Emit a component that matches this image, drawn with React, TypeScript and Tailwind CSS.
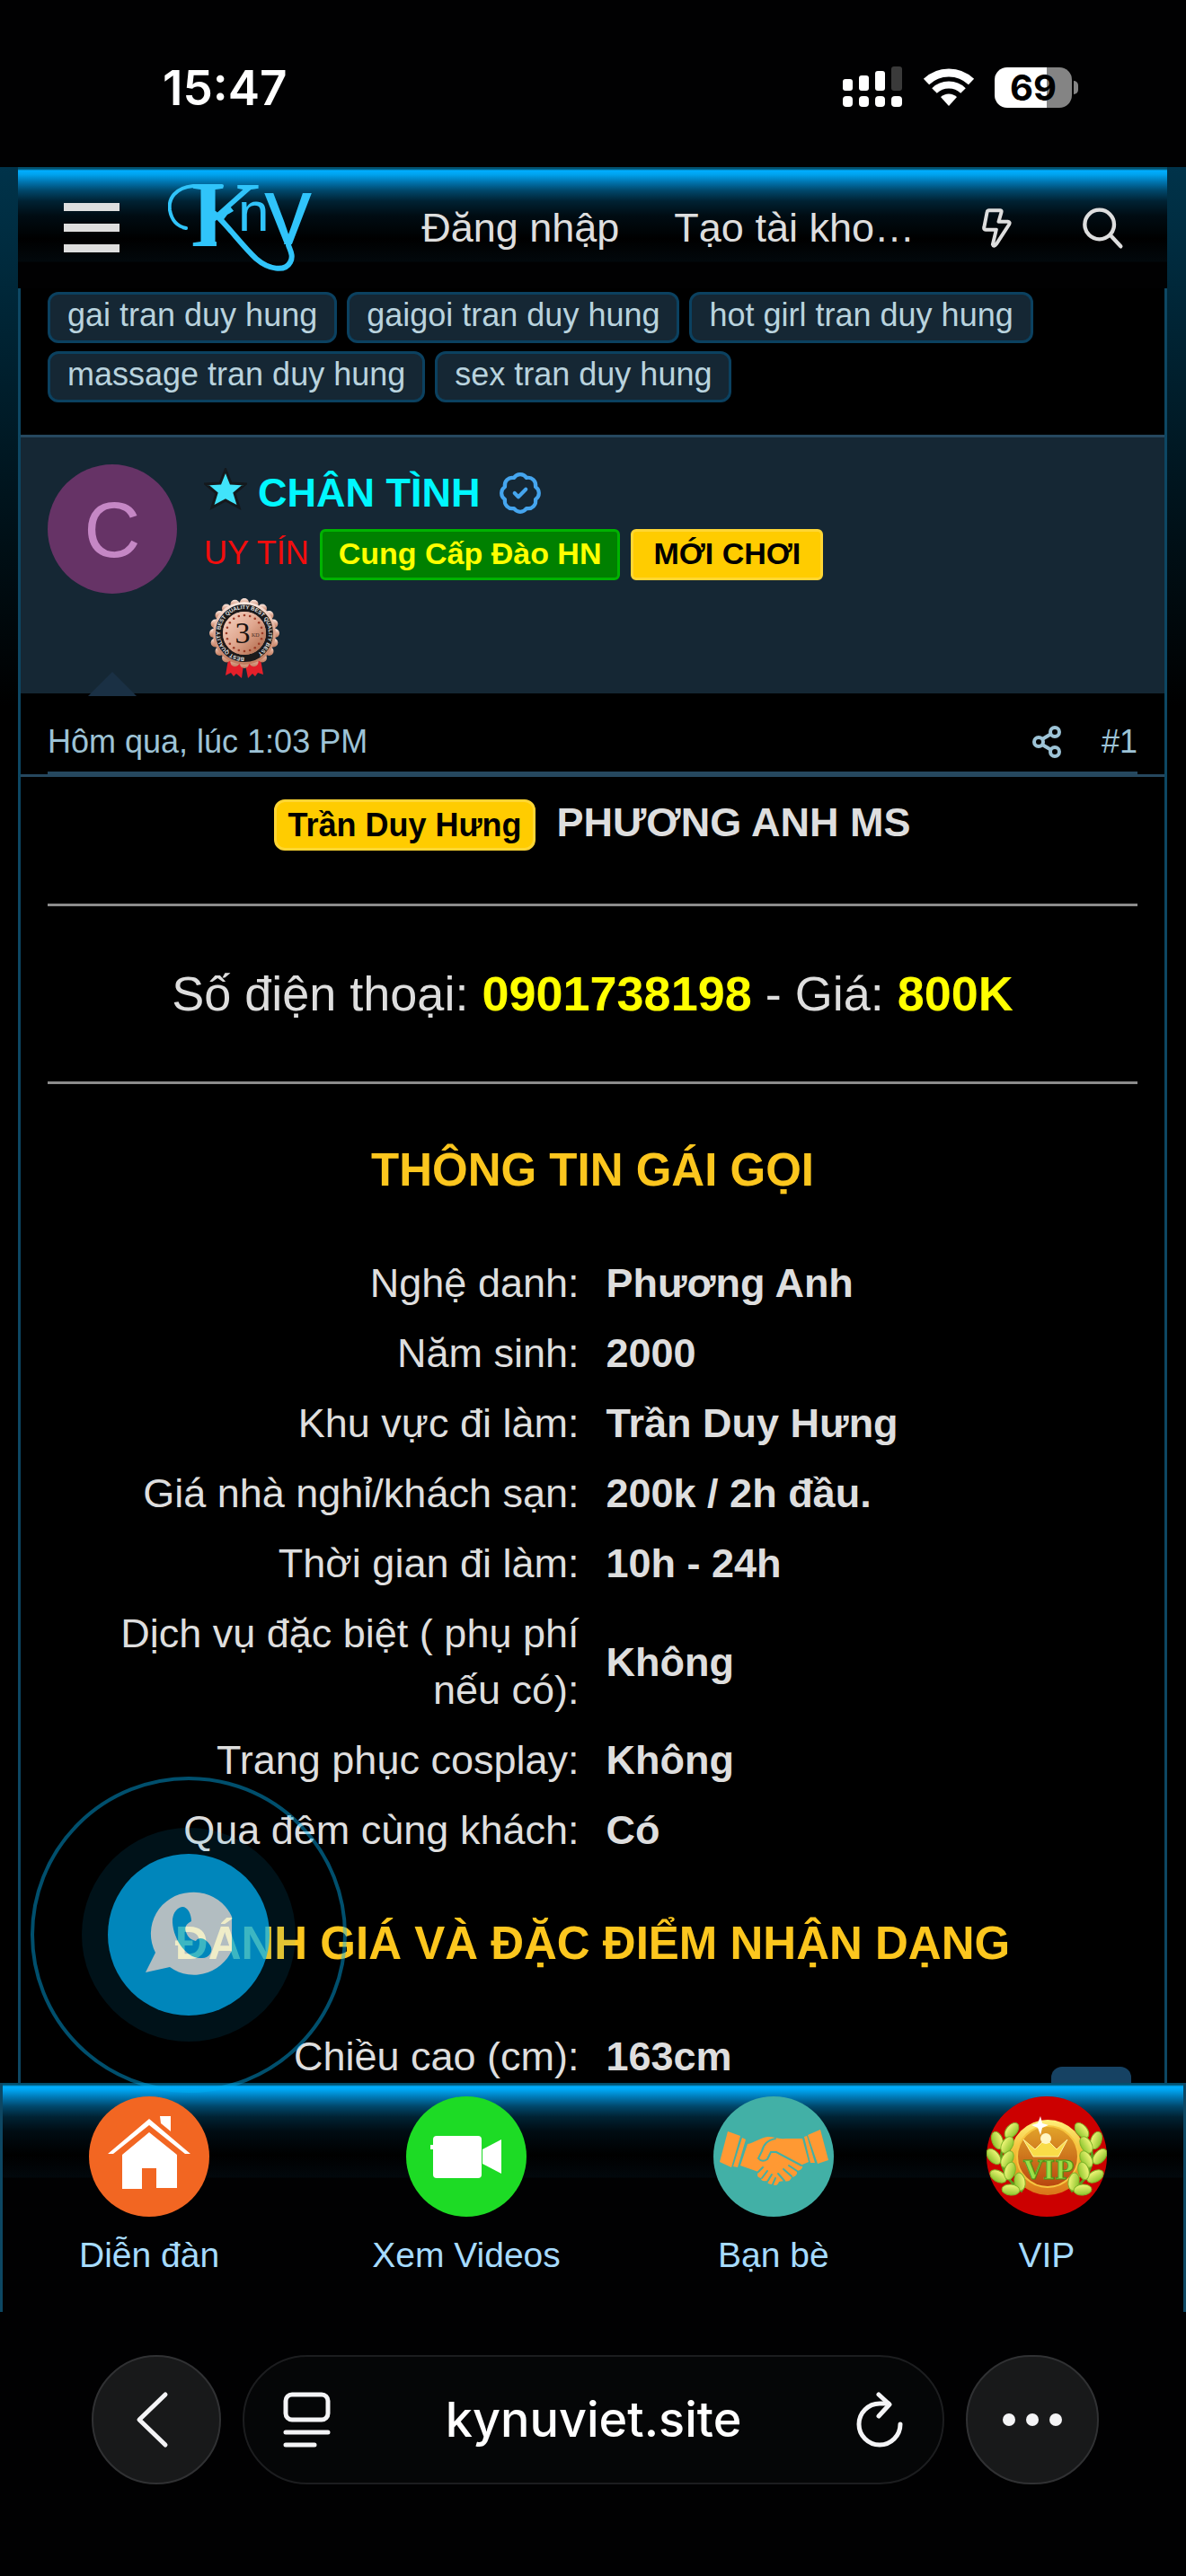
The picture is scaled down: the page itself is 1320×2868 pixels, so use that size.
import React from 'react';
import { BadgeCheck } from 'lucide-react';

interface InfoRow {
  label: string;
  value: string;
}

const tags = [
  'gai tran duy hung',
  'gaigoi tran duy hung',
  'hot girl tran duy hung',
  'massage tran duy hung',
  'sex tran duy hung',
];

const profileRows: InfoRow[] = [
  { label: 'Nghệ danh:', value: 'Phương Anh' },
  { label: 'Năm sinh:', value: '2000' },
  { label: 'Khu vực đi làm:', value: 'Trần Duy Hưng' },
  { label: 'Giá nhà nghỉ/khách sạn:', value: '200k / 2h đầu.' },
  { label: 'Thời gian đi làm:', value: '10h - 24h' },
  { label: 'Dịch vụ đặc biệt ( phụ phí nếu có):', value: 'Không' },
  { label: 'Trang phục cosplay:', value: 'Không' },
  { label: 'Qua đêm cùng khách:', value: 'Có' },
];

const bodyRows: InfoRow[] = [{ label: 'Chiều cao (cm):', value: '163cm' }];

const GLOW =
  'bg-[linear-gradient(#02506e_0px,#02506e_2px,#00aeff_4px,#00a4f0_8px,#0078b4_16px,#00486c_26px,#002233_38px,#000c13_54px,#000_80px,#02080c_105px,#010102_106px)]';

function StatusBar() {
  return (
    <div className="flex h-[186px] items-start justify-between bg-[#010102] pt-[66px] pr-[120px] pl-[181px] font-['Inter',sans-serif] text-white">
      <span className="text-[53px] leading-[64px] font-semibold">15:47</span>
      <div className="flex items-center gap-[22px] pt-2">
        <svg className="h-[46px] w-[67px]" viewBox="0 0 67 46" fill="#fff">
          <rect x="0" y="14" width="11" height="13" rx="3" />
          <rect x="18" y="10" width="11" height="17" rx="3" />
          <rect x="36" y="5" width="11" height="22" rx="3" />
          <rect x="54" y="0" width="12" height="27" rx="3" fill="#3a3a3a" />
          <rect x="0" y="33" width="11" height="12" rx="4" />
          <rect x="18" y="33" width="11" height="12" rx="4" />
          <rect x="36" y="33" width="11" height="12" rx="4" />
          <rect x="54" y="33" width="12" height="12" rx="4" />
        </svg>
        <svg className="h-[44px] w-[58px]" viewBox="0 0 58 44">
          <path d="M4 16 A36 36 0 0 1 54 16" fill="none" stroke="#fff" strokeWidth="9" />
          <path d="M13 26 A23 23 0 0 1 45 26" fill="none" stroke="#fff" strokeWidth="8" />
          <path d="M29 43 L20 33 A13 13 0 0 1 38 33 Z" fill="#fff" />
        </svg>
        <div className="flex items-center gap-[2px]">
          <div className="h-[45px] w-[86px] rounded-[14px] bg-[linear-gradient(90deg,#fff_68%,#848484_68%)] text-center text-[40px] leading-[45px] font-bold text-black">
            69
          </div>
          <div className="h-[15px] w-[5px] rounded-r-full bg-[#848484]" />
        </div>
      </div>
    </div>
  );
}

function Logo() {
  return (
    <svg className="h-[98px] w-[160px]" viewBox="0 0 160 98" role="img" aria-label="Kny">
      <defs>
        <clipPath id="k-top">
          <path d="M20 0 H110 V8 L66 34 L54 50 V80 H20 Z" />
        </clipPath>
        <clipPath id="y-top">
          <rect x="100" y="0" width="60" height="67" />
        </clipPath>
      </defs>
      <g fill="#30c4fa">
        <text x="26" y="69" fontSize="104" fontWeight="700" fontFamily="Liberation Serif" clipPath="url(#k-top)">K</text>
        <text x="78" y="52" fontSize="62" fontFamily="Liberation Sans">n</text>
        <text x="107" y="66" fontSize="106" fontFamily="Liberation Sans" clipPath="url(#y-top)">y</text>
      </g>
      <g fill="none" stroke="#30c4fa" strokeLinecap="round">
        <path d="M60 2 H28 C8 4 0 16 2 29 C4 40 10 47 20 49" strokeWidth="4" />
        <path d="M52 33 C68 48 82 68 98 83 C112 95 130 98 136 87 C140 80 136 74 134 68" strokeWidth="6" />
      </g>
    </svg>
  );
}

function SiteHeader() {
  return (
    <header className={`flex h-[135px] items-center pr-[46px] pl-[51px] text-[45px] leading-[63px] text-[#dedede] ${GLOW}`}>
      <button aria-label="Menu" className="flex w-[62px] flex-col gap-[14px]">
        <span className="h-[9px] bg-[#dedede]" />
        <span className="h-[9px] bg-[#dedede]" />
        <span className="h-[9px] bg-[#dedede]" />
      </button>
      <a href="#home" className="ml-[54px]">
        <Logo />
      </a>
      <nav className="ml-auto flex items-center whitespace-nowrap">
        <a href="#login">Đăng nhập</a>
        <a href="#register" className="ml-[61px]">Tạo tài kho…</a>
        <button aria-label="Có gì mới" className="ml-[73px]">
          <svg className="h-[50px] w-[37px]" viewBox="150 85 112 150" fill="none" stroke="#dedede" strokeWidth="12" strokeLinejoin="round">
            <path d="M180 100 H218 Q223 100 221 107 L212 138 H243 Q252 139 247 148 L204 214 Q195 225 192 215 L204 165 H168 Q161 165 163 157 L173 106 Q174 100 180 100 Z" />
          </svg>
        </button>
        <button aria-label="Tìm kiếm" className="ml-[75px]">
          <svg className="size-[50px]" viewBox="485 85 150 150" fill="none" stroke="#dedede" strokeWidth="13" strokeLinecap="round">
            <circle cx="547" cy="148" r="49" />
            <path d="M584 184 L618 221" />
          </svg>
        </button>
      </nav>
    </header>
  );
}

function Medal() {
  const scallops = Array.from({ length: 20 }, (_, i) => (i * Math.PI) / 10);
  return (
    <svg className="h-[90px] w-[78px]" viewBox="0 0 78 90" role="img" aria-label="3 KD">
      <defs>
        <linearGradient id="bronze" x1="0" y1="0" x2="1" y2="1">
          <stop offset="0" stopColor="#f6d5c5" />
          <stop offset="0.5" stopColor="#e0a78f" />
          <stop offset="1" stopColor="#a9603f" />
        </linearGradient>
        <linearGradient id="edge" x1="0" y1="0" x2="0" y2="1">
          <stop offset="0" stopColor="#fbeae2" />
          <stop offset="0.5" stopColor="#dba48d" />
          <stop offset="1" stopColor="#c07a5c" />
        </linearGradient>
        <path id="medal-ring" d="M39 66 A27 27 0 1 1 39.1 66" />
      </defs>
      <path d="M21 68 L38 74 L36 89 L30 84 L27 87 L24 83 L18 86 Z" fill="#e3202a" />
      <path d="M57 68 L40 74 L43 89 L48 84 L51 87 L54 83 L60 85 Z" fill="#e3202a" />
      {scallops.map((a) => (
        <circle key={a} cx={39 + 34 * Math.cos(a)} cy={39 + 34 * Math.sin(a)} r="5" fill="url(#edge)" />
      ))}
      <circle cx="39" cy="39" r="35" fill="url(#edge)" />
      <circle cx="39" cy="39" r="28" fill="none" stroke="#1c1a1b" strokeWidth="8" />
      <circle cx="39" cy="39" r="24" fill="url(#bronze)" />
      <text fontSize="6" fontWeight="700" fill="#e6e6e6" fontFamily="Liberation Sans">
        <textPath href="#medal-ring">BEST QUALITY BEST QUALITY BEST QUALITY BEST</textPath>
      </text>
      {scallops.map((a) => (
        <circle key={a} cx={39 + 20 * Math.cos(a)} cy={39 + 20 * Math.sin(a)} r="1.3" fill="#9c3b26" />
      ))}
      <text x="37" y="50" textAnchor="middle" fontSize="34" fontFamily="Liberation Serif" fill="#17110f">3</text>
      <text x="47" y="43" fontSize="6" fontFamily="Liberation Serif" fill="#4b2a1f">KD</text>
    </svg>
  );
}

function PostAuthor() {
  return (
    <div className="relative flex gap-[30px] border-t-[3px] border-[#26485f] bg-[#152734] px-[30px] pt-[30px] pb-4">
      <div className="flex size-36 shrink-0 items-center justify-center rounded-full bg-[#663366] text-[87px] leading-none text-[#c587c5]">
        C
      </div>
      <div>
        <div className="flex items-center text-[45px] leading-[63px] font-bold text-[#00f7ff]">
          <svg className="mb-2 size-12" viewBox="0 0 48 48">
            <path d="M24 2 L30 17 L46 18 L34 28 L39 44 L24 36 L9 44 L14 28 L2 18 L18 17 Z" fill="#41e4fb" stroke="#14181c" strokeWidth="3" />
          </svg>
          <h4 className="ml-3">CHÂN TÌNH</h4>
          <BadgeCheck className="ml-5 size-[50px] text-[#45a5ee]" strokeWidth={2} />
        </div>
        <div className="mt-[9px] flex items-baseline gap-3 text-[34px] leading-[45px]">
          <span className="text-[36px] text-[#f20d0d]">UY TÍN</span>
          <span className="rounded-md border-[3px] border-[#00b300] bg-[#008000] px-[18px] pt-0.5 pb-1 font-bold text-[#ffff00]">
            Cung Cấp Đào HN
          </span>
          <span className="rounded-md border-[3px] border-[#ffd633] bg-[#ffcc00] px-[22px] pt-0.5 pb-1 font-bold text-black">
            MỚI CHƠI
          </span>
        </div>
        <div className="mt-5 ml-[6px]">
          <Medal />
        </div>
      </div>
      <svg className="absolute -bottom-[3px] left-[75px] h-[27px] w-[54px]" viewBox="0 0 54 27">
        <path d="M27 0 L54 27 H0 Z" fill="#1a3044" />
      </svg>
    </div>
  );
}

function InfoTable({ rows }: { rows: InfoRow[] }) {
  return (
    <table className="w-full table-fixed text-[45px] leading-[63px]">
      <tbody>
        {rows.map((row) => (
          <tr key={row.label}>
            <th scope="row" className="px-[15px] pt-2 pb-[7px] text-right font-normal">{row.label}</th>
            <td className="px-[15px] pt-2 pb-[7px] font-bold">{row.value}</td>
          </tr>
        ))}
      </tbody>
    </table>
  );
}

function HomeIcon() {
  return (
    <svg className="size-[134px]" viewBox="0 0 134 134">
      <circle cx="67" cy="67" r="67" fill="#f26622" />
      <g fill="#fff">
        <path d="M21 64 L67 25 L113 64 H107 L67 32 L27 64 Z" />
        <path d="M79 22 H91 V39 L80 30 Z" />
        <path d="M67 40 L98 65 V102 H75 V80 H59 V103 H37 V65 Z" />
      </g>
    </svg>
  );
}

function VideoIcon() {
  return (
    <svg className="size-[134px]" viewBox="0 0 134 134">
      <circle cx="67" cy="67" r="67" fill="#1ddb25" />
      <g fill="#fff">
        <rect x="30" y="44" width="54" height="47" rx="4" />
        <path d="M27 54 H31 V59 H27 Z" />
        <path d="M85 59 L106 48 V86 L85 75 Z" />
      </g>
    </svg>
  );
}

function FriendsIcon() {
  return (
    <svg className="size-[134px]" viewBox="0 0 134 134">
      <circle cx="67" cy="67" r="67" fill="#42b0a6" />
      <g fill="#ff9933">
        <path d="M7 73 L16 39 L30 44 L20 79 Z" />
        <path d="M32 46 L36 48 L27 79 L22 78 Z" />
        <path d="M105 43 L119 37 L128 71 L116 75 Z" />
        <path d="M101 45 L104 44 L113 74 L108 74 Z" />
        <path d="M38 53 C45 52 52 46 61 45 C68 45 72 48 80 47 L99 47 L106 73 L99 76 Q100 82 93 83 Q94 89 87 90 Q85 96 79 94 L73 95 Q71 101 66 98 Q60 98 59 94 Q53 95 53 91 Q47 90 50 84 L30 77 Z" />
      </g>
      <g fill="none" stroke="#42b0a6" strokeWidth="2" strokeLinecap="round">
        <path d="M69 47 C60 49 56 53 54 61 L50 69 Q54 74 60 70 L64 62 L70 62 L98 77" />
        <path d="M84 77 L93 83 M78 81 L87 89 M72 86 L79 94" />
        <path d="M50 84 L55 79 M54 91 L60 83 M60 95 L65 87 M66 98 L69 91" />
      </g>
    </svg>
  );
}

// One side of the laurel; the other side is mirrored.
const leaves = [
  { x: 28, y: 38, r: -50 },
  { x: 12, y: 49, r: 70 },
  { x: 23, y: 54, r: -60 },
  { x: 8, y: 67, r: 50 },
  { x: 23, y: 70, r: -60 },
  { x: 13, y: 89, r: 30 },
  { x: 26, y: 83, r: -75 },
  { x: 37, y: 95, r: 80 },
  { x: 27, y: 104, r: 5 },
];

function VipIcon() {
  const laurel = (
    <>
      <path d="M30 38 C8 60 14 88 40 106" fill="none" stroke="#5c9a1c" strokeWidth="3" />
      {leaves.map((l) => (
        <ellipse key={`${l.x}-${l.y}`} cx={l.x} cy={l.y} rx="10" ry="6" transform={`rotate(${l.r} ${l.x} ${l.y})`} fill="url(#leaf)" stroke="#7fb52a" />
      ))}
    </>
  );
  return (
    <svg className="size-[134px]" viewBox="0 0 134 134">
      <defs>
        <linearGradient id="leaf" x1="0" y1="0" x2="0" y2="1">
          <stop offset="0" stopColor="#f4f77a" />
          <stop offset="1" stopColor="#8fc62f" />
        </linearGradient>
        <linearGradient id="gold" x1="0" y1="0" x2="0" y2="1">
          <stop offset="0" stopColor="#fff07a" />
          <stop offset="0.5" stopColor="#f0b52c" />
          <stop offset="1" stopColor="#d9731a" />
        </linearGradient>
        <linearGradient id="coin" x1="0" y1="0" x2="0" y2="1">
          <stop offset="0" stopColor="#e3a52a" />
          <stop offset="1" stopColor="#b8450f" />
        </linearGradient>
      </defs>
      <circle cx="67" cy="67" r="67" fill="#cc0000" />
      <circle cx="68" cy="68" r="42" fill="url(#gold)" />
      <circle cx="68" cy="67" r="34" fill="url(#coin)" stroke="#f7c640" strokeWidth="2" />
      <path d="M41 48 L54 59 L63 50 H69 L78 59 L90 48 L80 67 H52 Z" fill="#f9dc48" stroke="#fff3a0" />
      <circle cx="66" cy="47" r="6" fill="#fff6c4" />
      <text x="69" y="92" textAnchor="middle" fontSize="28" fontWeight="700" fontFamily="DejaVu Serif" fill="#9be04a" stroke="#4d9416" strokeWidth="1">VIP</text>
      <path d="M60 22 L62 30 L69 32 L62 35 L60 43 L57 35 L50 32 L57 30 Z" fill="#fff" />
      {laurel}
      <g transform="translate(134 0) scale(-1 1)">{laurel}</g>
    </svg>
  );
}

const navItems = [
  { label: 'Diễn đàn', icon: <HomeIcon /> },
  { label: 'Xem Videos', icon: <VideoIcon /> },
  { label: 'Bạn bè', icon: <FriendsIcon /> },
  { label: 'VIP', icon: <VipIcon /> },
];

function ContactBubble() {
  return (
    <a
      href="#contact"
      aria-label="Liên hệ"
      className="absolute bottom-[-11px] left-[34px] z-20 flex size-[352px] items-center justify-center rounded-full border-4 border-[#00aff2]/45"
    >
      <span className="flex size-[238px] items-center justify-center rounded-full bg-[#00aff2]/10">
        <span className="flex size-[180px] items-center justify-center rounded-full bg-[#00b2f7] opacity-[0.73]">
          <svg className="size-24" viewBox="0 0 96 96">
            <path d="M49 1 A46 46 0 1 1 27 84 L0 90 L11 68 A46 46 0 0 1 49 1 Z" fill="#f5fdff" />
            <path d="M41 17 C47 17 51 25 51 33 C45 36 43 40 45 45 C47 51 51 54 56 55 C60 49 68 53 72 60 C76 66 71 74 63 74 C45 76 29 50 30 31 C31 23 35 18 41 17 Z" fill="#00b2f7" />
          </svg>
        </span>
      </span>
    </a>
  );
}

function BrowserBar() {
  return (
    <div className="flex items-center gap-6 bg-[#010102] pt-12 pr-[97px] pb-[102px] pl-[102px] font-['Inter',sans-serif] text-[#f4f4f6]">
      <button aria-label="Back" className="flex size-36 shrink-0 items-center justify-center rounded-full border-2 border-[#303133] bg-[#18191a] pr-2">
        <svg className="h-[64px] w-[38px]" viewBox="0 0 38 64" fill="none" stroke="currentColor" strokeWidth="5" strokeLinecap="round" strokeLinejoin="round">
          <path d="M33 4 L4 32 L33 60" />
        </svg>
      </button>
      <div className="flex h-36 flex-1 items-center justify-between rounded-full border-2 border-[#1c1d1f] bg-[#050607] px-[43px]">
        <button aria-label="Page menu">
          <svg className="h-[62px] w-[53px]" viewBox="0 0 53 62" fill="none" stroke="currentColor" strokeWidth="5" strokeLinecap="round">
            <rect x="3" y="3" width="47" height="28" rx="7" />
            <path d="M3 45 H50 M3 59 H35" />
          </svg>
        </button>
        <span className="text-[54px] leading-[64px] font-medium text-white">kynuviet.site</span>
        <button aria-label="Reload">
          <svg className="h-[62px] w-[53px]" viewBox="0 0 53 62" fill="none" stroke="currentColor" strokeWidth="5" strokeLinecap="round" strokeLinejoin="round">
            <path d="M49 36 A23 23 0 1 1 26 13 H36" />
            <path d="M25 3 L37 14 L25 27" />
          </svg>
        </button>
      </div>
      <button aria-label="More" className="flex h-36 w-[148px] shrink-0 items-center justify-center gap-3 rounded-full border-2 border-[#303133] bg-[#18191a]">
        <span className="size-[14px] rounded-full bg-[#f4f4f6]" />
        <span className="size-[14px] rounded-full bg-[#f4f4f6]" />
        <span className="size-[14px] rounded-full bg-[#f4f4f6]" />
      </button>
    </div>
  );
}

export default function App() {
  return (
    <div className="min-h-screen bg-black font-['Liberation_Sans',Arial,sans-serif] text-[#dedede]">
      <StatusBar />

      <div className="relative -mb-[9px] bg-[linear-gradient(#00334a,#000_600px)] pr-[21px] pl-5">
        <SiteHeader />

        <main className="border-x-[3px] border-[#0d4763] bg-black">
          <div className="flex flex-wrap gap-x-[11px] gap-y-[9px] px-[30px] pt-1 pb-9">
            {tags.map((tag) => (
              <a
                key={tag}
                href="#tag"
                className="rounded-xl border-[3px] border-[#0b4160] bg-[#152734] px-[19px] pb-[6px] text-[36px] leading-[45px] text-[#b9d3de]"
              >
                {tag}
              </a>
            ))}
          </div>

          <article>
            <PostAuthor />

            <div className="border-b-[3px] border-[#26485f] px-[30px]">
              <div className="flex items-center border-b-[3px] border-[#26485f] pt-[29px] pb-2 text-[36px] leading-[50px] text-[#9dc3d6]">
                <time>Hôm qua, lúc 1:03 PM</time>
                <button aria-label="Chia sẻ" className="ml-auto">
                  <svg className="h-9 w-[33px]" viewBox="0 0 33 36" fill="none" stroke="currentColor" strokeWidth="4">
                    <circle cx="7" cy="18" r="5" />
                    <circle cx="25" cy="7" r="5" />
                    <circle cx="25" cy="29" r="5" />
                    <path d="M11 15 L21 9 M11 21 L21 27" />
                  </svg>
                </button>
                <a href="#post-1" className="ml-11">#1</a>
              </div>
            </div>

            <div className="px-[30px] pt-[19px]">
              <h1 className="flex items-baseline justify-center gap-6 pb-[59px] text-[45px] leading-[63px] font-bold">
                <span className="rounded-xl border-[3px] border-[#ffd633] bg-[#ffcc00] px-3 text-[36px] leading-[51px] text-black">
                  Trần Duy Hưng
                </span>
                PHƯƠNG ANH MS
              </h1>

              <p className="border-y-[3px] border-[#8c8c8c] py-[60px] text-center text-[54px] leading-[75px]">
                Số điện thoại: <b className="text-[#ffff00]">0901738198</b> - Giá: <b className="text-[#ffff00]">800K</b>
              </p>

              <h2 className="mt-[60px] mb-[50px] text-center text-[51px] leading-[72px] font-bold text-[#fcc61e]">
                THÔNG TIN GÁI GỌI
              </h2>
              <InfoTable rows={profileRows} />

              <h2 className="mt-[52px] mb-[50px] text-center text-[51px] leading-[72px] font-bold text-[#fcc61e]">
                ĐÁNH GIÁ VÀ ĐẶC ĐIỂM NHẬN DẠNG
              </h2>
              <InfoTable rows={bodyRows} />
            </div>
          </article>
        </main>

        <button aria-label="Lên đầu trang" className="absolute right-[61px] bottom-0 h-[27px] w-[89px] rounded-t-xl bg-[#164263]" />
      </div>

      <div className="relative">
        <nav className={`relative z-10 flex justify-around border-x-[3px] border-[#0d4763] pt-[15px] pb-9 ${GLOW}`}>
          {navItems.map((item) => (
            <a key={item.label} href="#nav" className="flex flex-col items-center gap-4 text-[39px] leading-[54px] text-[#a6dbff]">
              {item.icon}
              {item.label}
            </a>
          ))}
        </nav>
        <div className="absolute inset-x-0 top-0">
          <ContactBubble />
        </div>
      </div>

      <BrowserBar />
    </div>
  );
}
